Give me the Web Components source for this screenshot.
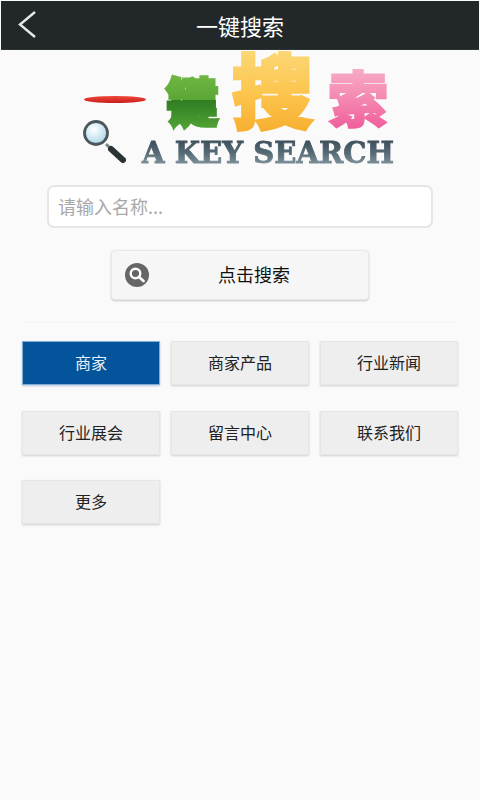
<!DOCTYPE html>
<html lang="zh">
<head>
<meta charset="utf-8">
<title>一键搜索</title>
<style>
  html, body { margin: 0; padding: 0; background: #fafafa; }
  body {
    width: 480px;
    height: 800px;
    overflow: hidden;
    font-family: "Noto Sans CJK SC", "Liberation Sans", sans-serif;
  }
</style>
</head>
<body>
<search-page>
  <app-header slot="header">一键搜索</app-header>
  <search-logo slot="logo"></search-logo>
  <search-field slot="field">请输入名称...</search-field>
  <search-button slot="button">点击搜索</search-button>
  <nav-tile active>商家</nav-tile>
  <nav-tile>商家产品</nav-tile>
  <nav-tile>行业新闻</nav-tile>
  <nav-tile>行业展会</nav-tile>
  <nav-tile>留言中心</nav-tile>
  <nav-tile>联系我们</nav-tile>
  <nav-tile>更多</nav-tile>
</search-page>

<script>
(function() {
  function define(name, html) {
    customElements.define(name, class extends HTMLElement {
      constructor() {
        super();
        this.attachShadow({ mode: "open" });
        this.shadowRoot.innerHTML = html;
      }
    });
  }

  define("search-page", `
    <style>
      :host { display: block; height: 800px; background: #fafafa; }
      .logo-row { display: flex; justify-content: center; padding-top: 1px; height: 115px; }
      .field-row { padding: 19px 47px 0; }
      .button-row { padding: 22px 111px 0; }
      hr { border: 0; height: 1px; background: #f3f3f3; margin: 22px 22px 18px; }
      .tiles {
        display: grid;
        grid-template-columns: repeat(3, 138px);
        grid-auto-rows: 44px;
        column-gap: 11px;
        row-gap: 25.5px;
        padding: 0 22px;
      }
    </style>
    <slot name="header"></slot>
    <div class="logo-row"><slot name="logo"></slot></div>
    <div class="field-row"><slot name="field"></slot></div>
    <div class="button-row"><slot name="button"></slot></div>
    <hr>
    <div class="tiles"><slot></slot></div>
  `);

  define("app-header", `
    <style>
      :host {
        display: flex;
        align-items: center;
        justify-content: center;
        position: relative;
        box-sizing: border-box;
        height: 49px;
        margin: 1px 1px 0;
        border-bottom: 1px solid #2e3336;
        background: #22272a;
        color: #fff;
        font-size: 22px;
        line-height: 48px;
      }
      svg { position: absolute; left: 16px; top: 9px; }
    </style>
    <svg width="22" height="30" viewBox="0 0 22 30" fill="none">
      <path d="M18 2 L3 14.5 L18 27" stroke="#e8e8e8" stroke-width="2.400"/>
    </svg>
    <slot></slot>
  `);

  define("search-logo", `
    <style>
      :host { display: block; width: 320px; height: 115px; }
      svg { display: block; overflow: visible; filter: blur(0.6px); }
      text { font-family: "Noto Sans CJK SC", sans-serif; font-weight: 900; }
      .en { font-family: "DejaVu Serif", serif; font-weight: 700; font-size: 29px; }
    </style>
    <svg width="320" height="115" viewBox="0 0 320 115">
      <defs>
        <linearGradient id="red" x1="0" y1="0" x2="0" y2="1">
          <stop offset="0" stop-color="#f04a3c"/><stop offset="1" stop-color="#c81a1a"/>
        </linearGradient>
        <linearGradient id="green" x1="0" y1="0" x2="0" y2="1">
          <stop offset="0" stop-color="#7cc04a"/><stop offset="0.5" stop-color="#5aa636"/>
          <stop offset="0.51" stop-color="#2f7d22"/><stop offset="1" stop-color="#5cae3a"/>
        </linearGradient>
        <linearGradient id="gold" x1="0" y1="0" x2="0" y2="1">
          <stop offset="0" stop-color="#fbe08c"/><stop offset="0.55" stop-color="#fcc64e"/>
          <stop offset="1" stop-color="#f6a726"/>
        </linearGradient>
        <linearGradient id="pink" x1="0" y1="0" x2="0" y2="1">
          <stop offset="0" stop-color="#f9c0d6"/><stop offset="0.55" stop-color="#f486b0"/>
          <stop offset="1" stop-color="#ee4f94"/>
        </linearGradient>
        <linearGradient id="steel" x1="0" y1="0" x2="0" y2="1">
          <stop offset="0" stop-color="#33454f"/><stop offset="0.5" stop-color="#566a75"/>
          <stop offset="1" stop-color="#93a5ad"/>
        </linearGradient>
        <radialGradient id="lens" cx="0.4" cy="0.35" r="0.7">
          <stop offset="0" stop-color="#ffffff"/><stop offset="1" stop-color="#a9d4e6"/>
        </radialGradient>
      </defs>
      <ellipse cx="35" cy="48.500" rx="31" ry="3.600" fill="url(#red)"/>
      <text x="86" y="71" font-size="52" fill="url(#green)" stroke="url(#green)" stroke-width="3.500">键</text>
      <text x="152" y="71" font-size="81" fill="url(#gold)" stroke="url(#gold)" stroke-width="3">搜</text>
      <text x="248" y="71" font-size="60" fill="url(#pink)" stroke="url(#pink)" stroke-width="2">索</text>
      <line x1="26" y1="93" x2="31" y2="98" stroke="#7a858a" stroke-width="3"/>
      <line x1="31" y1="98" x2="43" y2="109" stroke="#2b3236" stroke-width="6" stroke-linecap="round"/>
      <circle cx="16" cy="82" r="11.500" fill="url(#lens)" stroke="#4a565c" stroke-width="2.800"/>
      <text class="en" x="62" y="112" textLength="252" lengthAdjust="spacingAndGlyphs" fill="url(#steel)" stroke="url(#steel)" stroke-width="0.800">A KEY SEARCH</text>
    </svg>
  `);

  define("search-field", `
    <style>
      :host {
        display: block;
        box-sizing: border-box;
        height: 43px;
        padding-left: 9px;
        background: #fff;
        border: 2px solid #e6e6e6;
        border-radius: 7px;
        color: #a8a8a8;
        font-size: 18px;
        line-height: 38px;
      }
    </style>
    <slot></slot>
  `);

  define("search-button", `
    <style>
      :host {
        display: flex;
        align-items: center;
        box-sizing: border-box;
        height: 50px;
        padding-left: 13px;
        background: #f6f6f6;
        border: 1px solid #e8e8e8;
        border-radius: 4px;
        box-shadow: 0 1px 2px #c8c8c8;
        color: #111;
        font-size: 18px;
      }
      svg { flex: none; }
      span { flex: 1; text-align: center; padding: 0 9px 2px 0; }
    </style>
    <svg width="24" height="24" viewBox="0 0 24 24">
      <circle cx="12" cy="12" r="12" fill="#666"/>
      <circle cx="10.500" cy="10.500" r="4.800" fill="none" stroke="#fff" stroke-width="2.400"/>
      <path d="M14 14 L18.500 18" stroke="#fff" stroke-width="2.800" stroke-linecap="round"/>
    </svg>
    <span><slot></slot></span>
  `);

  define("nav-tile", `
    <style>
      :host {
        display: flex;
        align-items: center;
        justify-content: center;
        box-sizing: border-box;
        padding-bottom: 2px;
        background: #eeeeee;
        border: 1px solid #e6e6e6;
        box-shadow: 0 1px 2px #cfcfcf;
        color: #222;
        font-size: 16px;
      }
      :host([active]) {
        background: #04549b;
        border-color: #7fb0d8;
        color: #e8f0f8;
        box-shadow: 0 1px 2px #b8c8d8;
      }
    </style>
    <slot></slot>
  `);
})();
</script>
</body>
</html>
